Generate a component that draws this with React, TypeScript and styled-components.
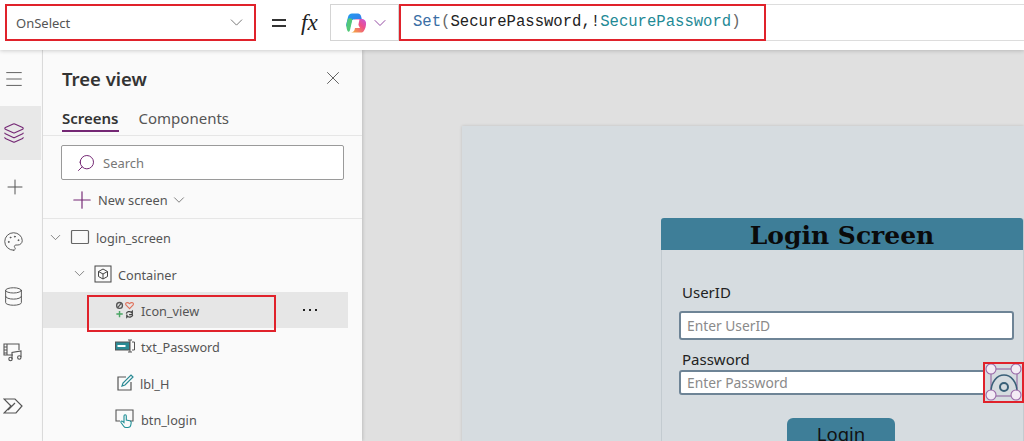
import { ReactNode } from "react";
import styled, { createGlobalStyle } from "styled-components";
import { ChevronDown, Database, Layers, Menu, Palette, Plus, Search, X } from "lucide-react";

const GlobalStyle = createGlobalStyle`
    html, body {
        margin: 0;
        padding: 0;
        height: 441px;
        overflow: hidden;
        background: #e0e0e0;
    }
    * { box-sizing: border-box; }
    body { font-family: "Noto Sans", "Open Sans", sans-serif; }
`;

const Page = styled.div`
    width: 1024px;
    height: 441px;
    display: flex;
    flex-direction: column;
    overflow: hidden;
`;

// formula bar
const TopBar = styled.div`
    height: 50px;
    flex: none;
    background: #fff;
    display: flex;
    padding-top: 4px;
    box-shadow: 0 1px 4px rgba(0, 0, 0, 0.18);
    position: relative;
    z-index: 2;
`;

const PropertySelect = styled.div`
    width: 251px;
    height: 37px;
    margin-left: 5px;
    border: 2px solid #e0222b;
    display: flex;
    align-items: center;
    justify-content: space-between;
    padding: 0 7px 0 9px;
    font-size: 13px;
    color: #555;
`;

const FxLabel = styled.div`
    width: 74px;
    height: 37px;
    display: flex;
    align-items: center;
    padding-left: 16px;
    gap: 15px;
`;

const Equals = styled.span`
    width: 14px;
    height: 8px;
    border-top: 2px solid #333;
    border-bottom: 2px solid #333;
`;

const Fx = styled.span`
    font-family: "Liberation Serif", serif;
    font-style: italic;
    font-size: 23px;
    color: #222;
`;

const CopilotBox = styled.div`
    width: 69px;
    height: 37px;
    border: 1px solid #d4d4d4;
    display: flex;
    align-items: center;
    padding-left: 14px;
    gap: 3px;
`;

const FormulaBox = styled.div`
    width: 367px;
    height: 37px;
    border: 2px solid #e0222b;
    display: flex;
    align-items: center;
    padding: 0 0 2px 12px;
    font-family: "Liberation Mono", monospace;
    font-size: 15.6px;
    color: #222;
    white-space: pre;
`;

const Token = styled.span<{ $color: string }>`
    color: ${(p) => p.$color};
`;

const FormulaRest = styled.div`
    flex: 1;
    height: 37px;
    border-top: 1px solid #ddd;
    border-bottom: 1px solid #ddd;
`;

const Main = styled.div`
    flex: 1;
    display: flex;
    min-height: 0;
`;

// left icon rail
const Rail = styled.div`
    width: 43px;
    flex: none;
    background: #fafafa;
    border-right: 1px solid #e0e0e0;
    display: flex;
    flex-direction: column;
    padding-top: 2px;
    color: #555;
`;

const RailItem = styled.div<{ $active?: boolean; $h: number }>`
    height: ${(p) => p.$h}px;
    width: 41px;
    display: flex;
    align-items: center;
    padding-left: 3px;
    background: ${(p) => (p.$active ? "#e8e8e8" : "transparent")};
    color: ${(p) => (p.$active ? "#742774" : "#555")};
`;

// tree view panel
const Panel = styled.div`
    width: 319px;
    flex: none;
    background: #fafafa;
    box-shadow: 1px 0 3px rgba(0, 0, 0, 0.15);
    display: flex;
    flex-direction: column;
    position: relative;
    z-index: 1;
`;

const PanelHeader = styled.div`
    height: 54px;
    padding: 2px 18px 0 19px;
    display: flex;
    align-items: center;
    justify-content: space-between;
    color: #555;
`;

const PanelTitle = styled.h2`
    margin: 0;
    font-size: 18.5px;
    font-weight: 600;
    color: #333;
`;

const Tabs = styled.div`
    height: 32px;
    padding-left: 19px;
    display: flex;
    gap: 20px;
    border-bottom: 1px solid #e6e6e6;
`;

const Tab = styled.div<{ $active?: boolean }>`
    height: 28px;
    font-size: 15px;
    line-height: 28px;
    font-weight: ${(p) => (p.$active ? 600 : 400)};
    color: ${(p) => (p.$active ? "#333" : "#555")};
    border-bottom: ${(p) => (p.$active ? "2px solid #742774" : "none")};
`;

const SearchBox = styled.div`
    width: 283px;
    height: 35px;
    margin: 9px 0 0 18px;
    background: #fff;
    border: 1px solid #9a9a9a;
    border-radius: 2px;
    display: flex;
    align-items: center;
    padding-left: 14px;
    gap: 7px;
    font-size: 13px;
    color: #777;
`;

const NewScreen = styled.div`
    height: 38px;
    margin-left: 25px;
    padding-top: 2px;
    display: flex;
    align-items: center;
    gap: 2px;
    font-size: 12.8px;
    color: #555;
`;

const Divider = styled.div`
    height: 1px;
    background: #e6e6e6;
`;

const TreeRow = styled.div<{ $indent: number; $selected?: boolean }>`
    height: 36.4px;
    width: 305px;
    flex: none;
    position: relative;
    display: flex;
    align-items: center;
    padding-left: ${(p) => p.$indent}px;
    gap: 6px;
    font-size: 12.7px;
    color: #555;
    background: ${(p) => (p.$selected ? "#e6e6e6" : "transparent")};
`;

const RowAnnotation = styled.div`
    position: absolute;
    left: 44px;
    top: 3px;
    width: 189px;
    height: 37px;
    border: 2px solid #e0222b;
`;

const MoreDots = styled.span`
    position: absolute;
    left: 260px;
    top: 17px;
    display: flex;
    gap: 4px;

    & > i {
        width: 2px;
        height: 2px;
        background: #222;
    }
`;

const RowLabel = styled.span`
    position: relative;
    top: 1px;
`;

// canvas with the app preview
const Canvas = styled.div`
    flex: 1;
    background: #e0e0e0;
    padding: 76px 0 0 100px;
    overflow: hidden;
`;

const AppScreen = styled.div`
    height: 400px;
    background: #d6dce0;
    box-shadow: 0 0 3px rgba(0, 0, 0, 0.15);
    padding: 92px 0 0 199px;
`;

const LoginCard = styled.div`
    width: 363px;
    height: 300px;
    border: 1px solid #c3cbd0;
    border-top: none;
    border-radius: 3px 3px 0 0;
    display: flex;
    flex-direction: column;
`;

const LoginHeader = styled.div`
    height: 32px;
    margin-left: -1px;
    background: #3e7e98;
    border-radius: 3px 3px 0 0;
    text-align: center;
    font-family: "DejaVu Serif", "Liberation Serif", serif;
    font-weight: 700;
    font-size: 25px;
    line-height: 35px;
    color: #0a0a0a;
    overflow: hidden;
`;

const LoginBody = styled.div`
    padding: 32px 9px 0 17px;
    display: flex;
    flex-direction: column;
`;

const FieldLabel = styled.label<{ $gap?: number }>`
    font-size: 15px;
    line-height: 21px;
    color: #222;
    padding-left: 3px;
    margin-top: ${(p) => p.$gap ?? 0}px;
`;

const TextField = styled.div<{ $width: number; $height: number; $gap?: number }>`
    width: ${(p) => p.$width}px;
    height: ${(p) => p.$height}px;
    margin-top: ${(p) => p.$gap ?? 0}px;
    background: #fff;
    border: 2px solid #6e8496;
    border-radius: 3px;
    font-size: 13.8px;
    color: #8a8a8a;
    display: flex;
    align-items: center;
    padding-left: 6px;
`;

const PasswordRow = styled.div`
    position: relative;
`;

const IconSelection = styled.div`
    position: absolute;
    left: 304px;
    top: -8px;
    width: 41px;
    height: 41px;
    border: 2px solid #e0222b;
    background: #d6dce0;
`;

const LoginButton = styled.div`
    align-self: center;
    width: 108px;
    height: 40px;
    margin: 23px 0 0 -11px;
    background: #3e7e98;
    border-radius: 6px;
    text-align: center;
    font-size: 18.5px;
    line-height: 31px;
    color: #111;
`;

function CopilotIcon() {
    return (
        <svg width="22" height="22" viewBox="0 0 22 22">
            <defs>
                <linearGradient id="cpA" x1="0" y1="0" x2="1" y2="1">
                    <stop offset="0" stopColor="#1f9ff0" />
                    <stop offset="1" stopColor="#3f6fe8" />
                </linearGradient>
                <linearGradient id="cpB" x1="0" y1="1" x2="1" y2="0">
                    <stop offset="0" stopColor="#f5b335" />
                    <stop offset="0.6" stopColor="#ee4f8a" />
                    <stop offset="1" stopColor="#c45adf" />
                </linearGradient>
            </defs>
            <path d="M7 1.500h6c1.500 0 2.500 1 3 2.500l1 4H7L5 15H2.500C1.500 15 1 14 1.200 12.500L3 5c.5-2.200 2-3.500 4-3.500z" fill="url(#cpA)" />
            <path d="M1.500 13c.2-2.500 1-6 2.500-7l3.500 1L5 18c-.4 1.500-1 2-2 1.500-1-1-1.700-3.500-1.500-6.500z" fill="#52c878" />
            <path d="M10 7h7c2 0 3.500 1.500 4 3.500.4 3-.8 6.500-2.200 8.500-.7 1-1.600 1.500-2.800 1.500H6c1.500 0 3-1 3.500-2.500l.5-2h5z" fill="url(#cpB)" />
            <path d="M8 7.500h6.500L13 14.500H6.500z" fill="#fff" />
        </svg>
    );
}

function ScreenIcon() {
    return (
        <svg width="20" height="16" viewBox="0 0 20 16" fill="none" stroke="#666" strokeWidth="1.2">
            <rect x="1.500" y="1.500" width="17" height="13" rx="1" />
        </svg>
    );
}

function ContainerIcon() {
    return (
        <svg width="18" height="18" viewBox="0 0 18 18" fill="none" stroke="#444" strokeWidth="1">
            <rect x="1" y="1" width="16" height="16" />
            <path d="M9 4l4.500 2.500v5L9 14l-4.500-2.500v-5zM4.500 6.500L9 9l4.500-2.500M9 9v5" />
        </svg>
    );
}

function ComponentIcons() {
    return (
        <svg width="20" height="20" viewBox="0 0 22 20" fill="none">
            <circle cx="5" cy="5" r="3.200" stroke="#555" strokeWidth="1.500" />
            <path d="M3 7.500l4-5" stroke="#555" strokeWidth="1.300" />
            <path d="M16 8.500l-4-4c-1.200-2 1.500-3.800 4-1.500 2.500-2.300 5.200-.5 4 1.500z" stroke="#e0705a" strokeWidth="1.200" />
            <path d="M5 11v7M1.500 14.500h7" stroke="#4aa564" strokeWidth="1.600" />
            <path d="M12.500 14c.4-2 3.500-3.200 5.500-1.500l1-1v3.500h-3.500M19.500 15.500c-.4 2-3.500 3.200-5.500 1.500l-1 1v-3" stroke="#444" strokeWidth="1.400" />
        </svg>
    );
}

function TextInputIcon() {
    return (
        <svg width="20" height="14" viewBox="0 0 20 14" fill="none" stroke="#555" strokeWidth="1">
            <rect x="0.500" y="3" width="14" height="8" fill="#2a8a94" stroke="#555" />
            <rect x="2.500" y="6" width="8" height="2" fill="#fff" stroke="none" />
            <path d="M13 1h4M15 1v12M13 13h4M17 3h2.500v8H17" />
        </svg>
    );
}

function LabelIcon() {
    return (
        <svg width="18" height="18" viewBox="0 0 18 18" fill="none" strokeWidth="1.200">
            <path d="M10 3H2v13h13V8" stroke="#555" />
            <path d="M6 12l1-3 8-8 2 2-8 8z" stroke="#2a8a94" />
        </svg>
    );
}

function ButtonIcon() {
    return (
        <svg width="20" height="20" viewBox="0 0 20 20" fill="none" strokeWidth="1.100">
            <path d="M5 12H1V1h17v11h-3" stroke="#555" />
            <path d="M9 7c0-1.600 2.300-1.600 2.300 0v4l3.500.7c1 .3 1.500 1 1.400 2l-.4 2.300c-.2 1.500-1.300 2.500-3 2.500H11c-1 0-1.800-.5-2.300-1.300L6 13.500c-.6-1 .7-2 1.600-1.200L9 13.500z" stroke="#1f8f96" />
        </svg>
    );
}

function MediaIcon() {
    return (
        <svg width="20" height="20" viewBox="0 0 20 20" fill="none" stroke="#555" strokeWidth="1.100">
            <path d="M10 13H1V2h15v6M4 2v11M1 5h3M1 8h3M1 11h3" />
            <path d="M9 17V10.500l9-1.500v6" />
            <circle cx="7.500" cy="17" r="1.700" />
            <circle cx="16.300" cy="15.500" r="1.700" />
        </svg>
    );
}

function FlowIcon() {
    return (
        <svg width="20" height="16" viewBox="0 0 20 16" fill="none" stroke="#555" strokeWidth="1.200">
            <path d="M1 1h11l7 7-6 7H1l7-7zM5 12l7-7" />
        </svg>
    );
}

function EyeSelection() {
    return (
        <svg width="37" height="37" viewBox="0 0 37 37" fill="none">
            <rect x="6" y="5" width="26" height="27" stroke="#8a5a9a" strokeWidth="1" />
            <path d="M6 28c0-10 6-17 13-17s13 7 13 17" stroke="#3a6078" strokeWidth="1.600" />
            <circle cx="19" cy="23" r="4" stroke="#3a6078" strokeWidth="2" />
            {[
                [6, 5],
                [31, 5],
                [6, 31],
                [31, 31],
            ].map(([cx, cy]) => (
                <circle key={`${cx}-${cy}`} cx={cx} cy={cy} r="5" fill="#f3ecf5" stroke="#9a6aa8" strokeWidth="1.100" />
            ))}
        </svg>
    );
}

function Row({ indent, icon, label, caret }: { indent: number; icon: ReactNode; label: string; caret?: boolean }) {
    return (
        <TreeRow $indent={indent}>
            {caret && <ChevronDown size={17} strokeWidth={1} />}
            {icon}
            <RowLabel>{label}</RowLabel>
        </TreeRow>
    );
}

export default function App() {
    return (
        <Page>
            <GlobalStyle />
            <TopBar>
                <PropertySelect>
                    OnSelect
                    <ChevronDown size={21} strokeWidth={1} color="#666" />
                </PropertySelect>
                <FxLabel>
                    <Equals />
                    <Fx>fx</Fx>
                </FxLabel>
                <CopilotBox>
                    <CopilotIcon />
                    <ChevronDown size={20} strokeWidth={1.1} color="#8a3a9a" />
                </CopilotBox>
                <FormulaBox>
                    <Token $color="#3a6ea5">Set</Token>
                    <Token $color="#666">(</Token>
                    SecurePassword,!
                    <Token $color="#1f8a96">SecurePassword</Token>
                    <Token $color="#666">)</Token>
                </FormulaBox>
                <FormulaRest />
            </TopBar>
            <Main>
                <Rail>
                    <RailItem $h={54}><Menu size={22} strokeWidth={1} /></RailItem>
                    <RailItem $h={54} $active><Layers size={22} strokeWidth={1.2} /></RailItem>
                    <RailItem $h={54}><Plus size={24} strokeWidth={1} /></RailItem>
                    <RailItem $h={55}><Palette size={21} strokeWidth={1.1} /></RailItem>
                    <RailItem $h={55}><Database size={21} strokeWidth={1.1} /></RailItem>
                    <RailItem $h={55}><MediaIcon /></RailItem>
                    <RailItem $h={54}><FlowIcon /></RailItem>
                </Rail>
                <Panel>
                    <PanelHeader>
                        <PanelTitle>Tree view</PanelTitle>
                        <X size={22} strokeWidth={1} />
                    </PanelHeader>
                    <Tabs>
                        <Tab $active>Screens</Tab>
                        <Tab>Components</Tab>
                    </Tabs>
                    <SearchBox>
                        <Search size={20} strokeWidth={1.2} color="#742774" style={{ transform: "scaleX(-1)" }} />
                        Search
                    </SearchBox>
                    <NewScreen>
                        <Plus size={28} strokeWidth={1} color="#742774" />
                        New screen
                        <ChevronDown size={18} strokeWidth={1} />
                    </NewScreen>
                    <Divider />
                    <Row indent={4} caret icon={<ScreenIcon />} label="login_screen" />
                    <Row indent={28} caret icon={<ContainerIcon />} label="Container" />
                    <TreeRow $indent={72} $selected>
                        <ComponentIcons />
                        <RowLabel>Icon_view</RowLabel>
                        <RowAnnotation />
                        <MoreDots><i /><i /><i /></MoreDots>
                    </TreeRow>
                    <Row indent={72} icon={<TextInputIcon />} label="txt_Password" />
                    <Row indent={73} icon={<LabelIcon />} label="lbl_H" />
                    <Row indent={72} icon={<ButtonIcon />} label="btn_login" />
                </Panel>
                <Canvas>
                    <AppScreen>
                        <LoginCard>
                            <LoginHeader>Login Screen</LoginHeader>
                            <LoginBody>
                                <FieldLabel>UserID</FieldLabel>
                                <TextField $width={335} $height={29} $gap={8}>Enter UserID</TextField>
                                <FieldLabel $gap={9}>Password</FieldLabel>
                                <PasswordRow>
                                    <TextField $width={312} $height={25}>Enter Password</TextField>
                                    <IconSelection><EyeSelection /></IconSelection>
                                </PasswordRow>
                                <LoginButton>Login</LoginButton>
                            </LoginBody>
                        </LoginCard>
                    </AppScreen>
                </Canvas>
            </Main>
        </Page>
    );
}
